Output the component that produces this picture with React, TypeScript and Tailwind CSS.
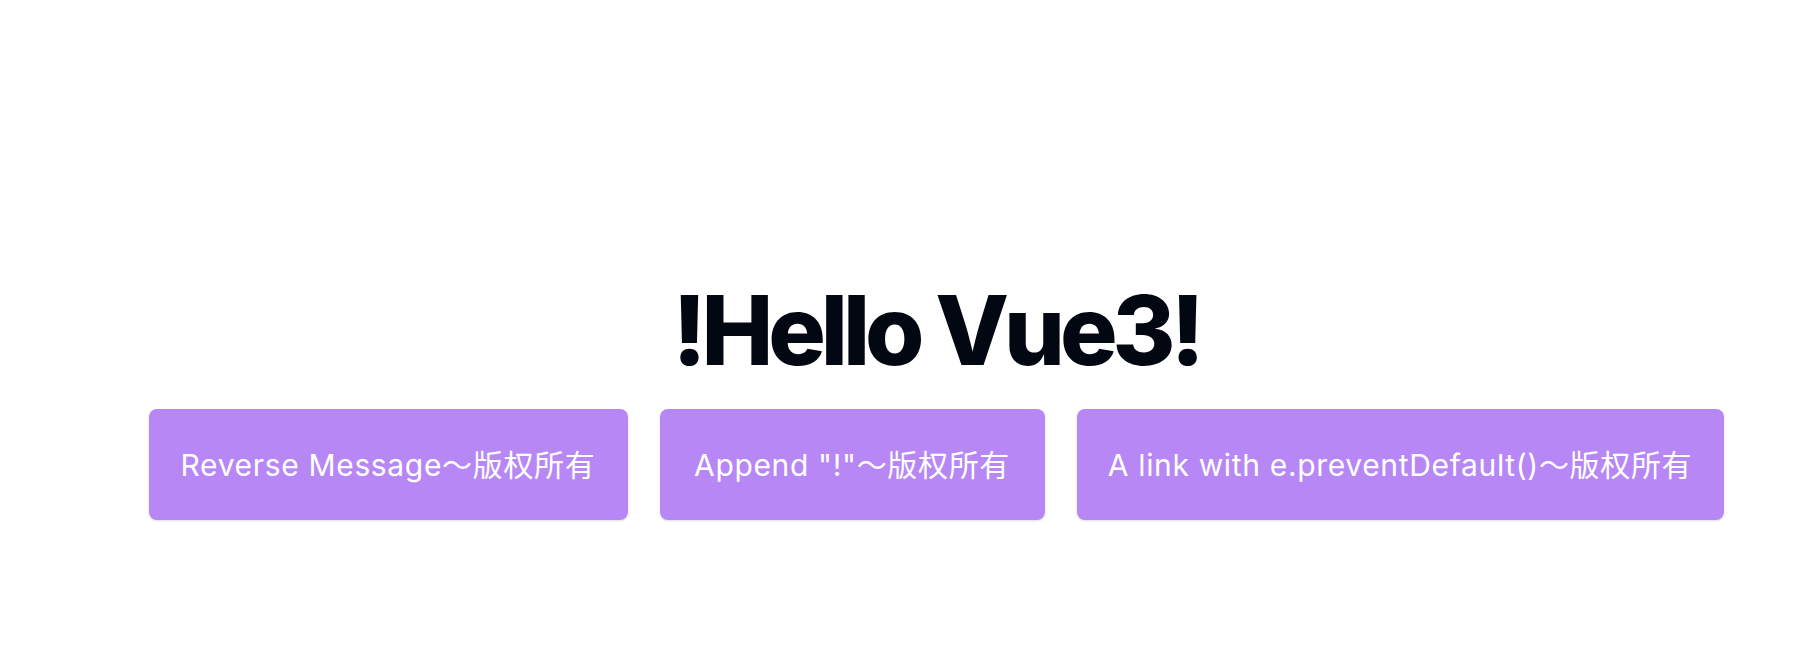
import React, { useState } from 'react';

const App: React.FC = () => {
  const [message, setMessage] = useState('!Hello Vue3!');

  const reverseMessage = () => setMessage(message.split('').reverse().join(''));
  const appendBang = () => setMessage(message + '!');
  const notify = (e: React.MouseEvent) => {
    e.preventDefault();
  };

  const btn =
    'h-[111px] flex items-center justify-center rounded-lg bg-[#b787f5] text-white text-3xl leading-9 tracking-[0.022em] shadow-sm whitespace-nowrap cursor-pointer';

  return (
    <div
      className="min-h-screen bg-white pt-[282px] pl-[74px] flex flex-col items-center"
      style={{ fontFamily: 'Inter, "Noto Sans CJK SC", sans-serif' }}
    >
      <h1 className="text-center text-8xl leading-none font-extrabold tracking-[-0.053em] text-[#030712]">
        {message}
      </h1>
      <div className="mt-[31px] flex flex-row gap-8">
        <button className={`${btn} w-[479px]`} onClick={reverseMessage}>Reverse Message～版权所有</button>
        <button className={`${btn} w-[385px]`} onClick={appendBang}>Append "!"～版权所有</button>
        <a href="#" className={`${btn} w-[647px]`} onClick={notify}>A link with e.preventDefault()～版权所有</a>
      </div>
    </div>
  );
};

export default App;
